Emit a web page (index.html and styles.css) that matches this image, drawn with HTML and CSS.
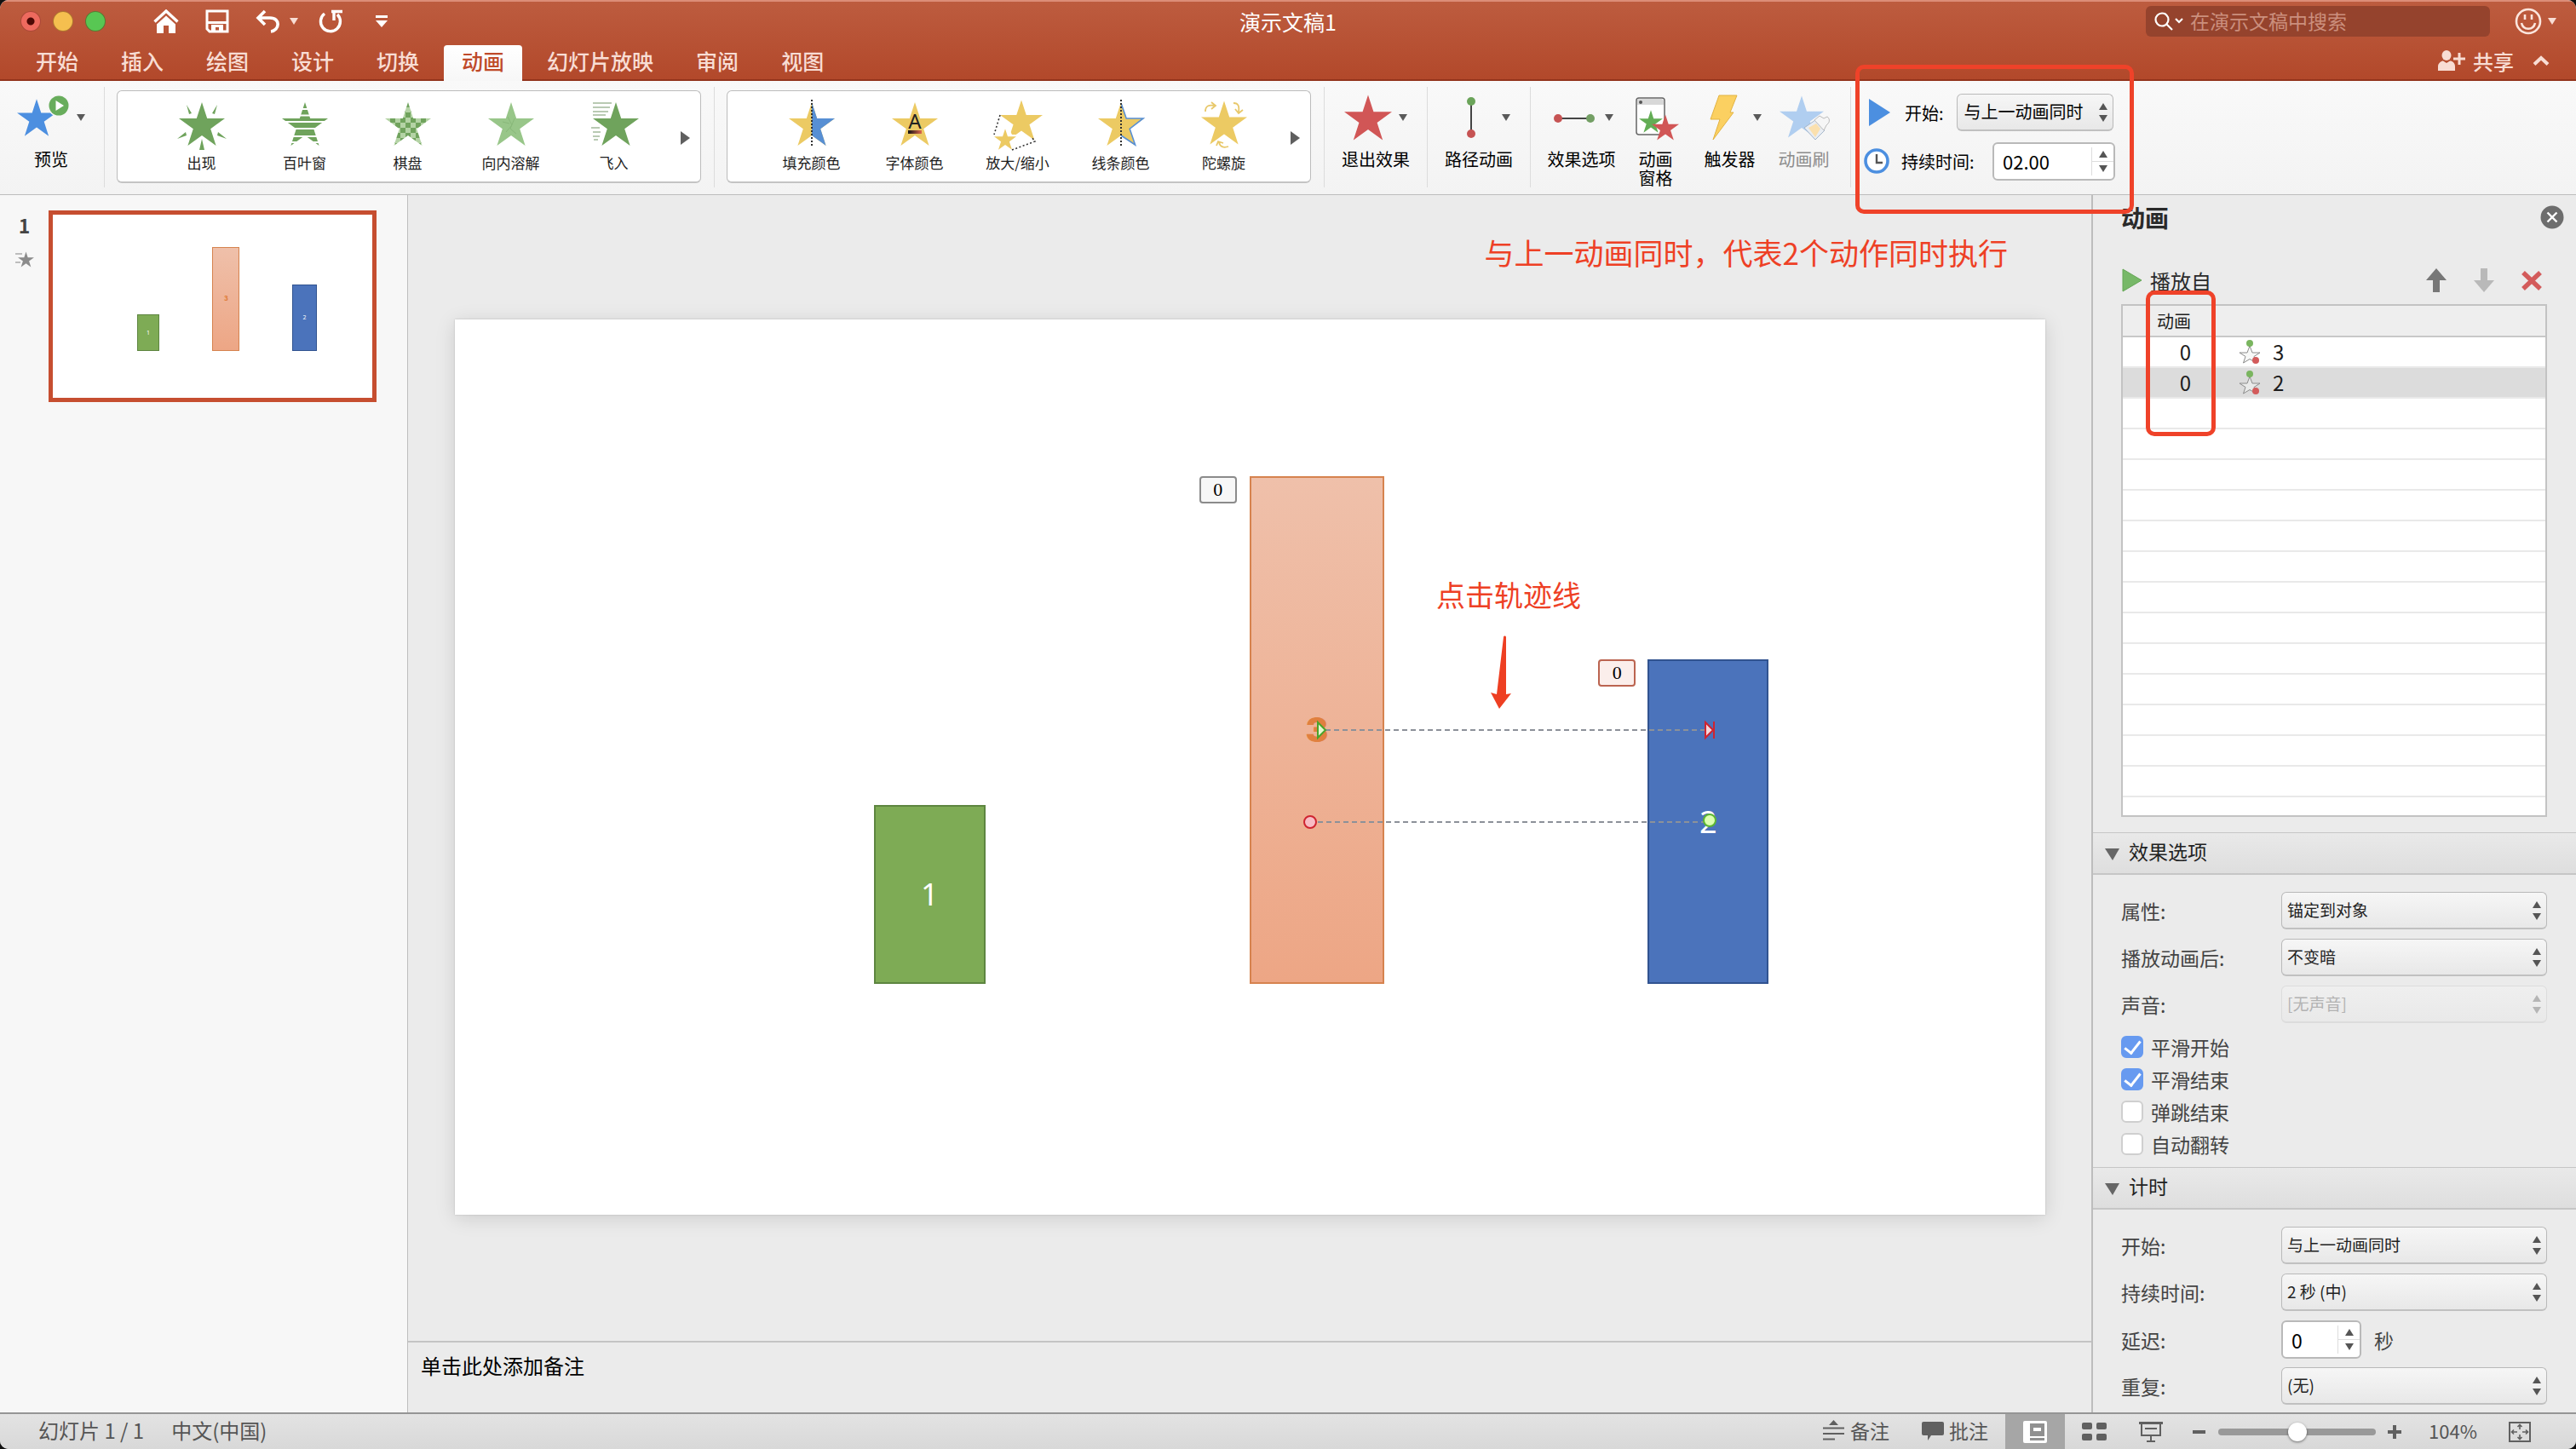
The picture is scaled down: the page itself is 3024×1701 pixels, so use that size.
FILE: index.html
```html
<!DOCTYPE html>
<html lang="zh-CN">
<head>
<meta charset="utf-8">
<meta name="viewport" content="width=device-width, initial-scale=1">
<title>演示文稿1</title>
<link rel="stylesheet" href="styles.css">
</head>
<body>
<svg class="defs" aria-hidden="true">
  <defs>
    <symbol id="star" viewBox="0 0 54 51"><path d="M27 0 33.2 19H54L37.2 31.2 43.6 51 27 39 10.4 51 16.8 31.2 0 19H20.800Z"/></symbol>
    <symbol id="down" viewBox="0 0 10 8"><path d="M0 0H10L5 8Z"/></symbol>
    <symbol id="updown" viewBox="0 0 10 22"><path d="M0 8 5 0 10 8ZM0 14H10L5 22Z"/></symbol>
    <symbol id="path-star" viewBox="0 0 26 28">
      <path d="M13 7 16 15H25L18 19.500 20.500 27 13 22.500 5.500 27 8 19.500 1 15H10Z" fill="#f1f3f1" fill-opacity=".6" stroke="#8c8c8c"/>
      <circle cx="13" cy="4" r="4" fill="#7ab55f"/><circle cx="20" cy="24" r="4" fill="#d35b5b"/>
    </symbol>
    <pattern id="checks" width="12" height="12" patternUnits="userSpaceOnUse"><rect width="12" height="12" fill="#b4d3a5"/><path d="M0 0H6V6H0ZM6 6H12V12H6Z" fill="#70a35d"/></pattern>
    <linearGradient id="ink"><stop stop-color="#111"/><stop offset="1" stop-color="#e0694f"/></linearGradient>
  </defs>
</svg>
<div class="window">
  <header class="titlebar">
    <div class="title-row">
      <div class="title-left">
        <div class="lights"><button class="light close" aria-label="关闭"></button><button class="light minimise" aria-label="最小化"></button><button class="light zoom" aria-label="缩放"></button></div>
        <div class="quick">
          <button aria-label="主页"><svg width="30" height="28" viewBox="0 0 30 28"><path d="M1.500 14.500 15 2 28.500 14.500" fill="none" stroke="#fff" stroke-width="3.400"/><path d="M4 17.500 15 7.500 26 17.500V28H18V19H12V28H4Z" fill="#fff"/></svg></button>
          <button aria-label="保存"><svg width="28" height="28" viewBox="0 0 28 28"><path d="M2 2H26V26H5L2 23Z" fill="none" stroke="#fff" stroke-width="3"/><path d="M2 14H26V17H2ZM7 18H21V27H16V21H12V27H7Z" fill="#fff"/></svg></button>
          <button class="undo" aria-label="撤消"><svg width="28" height="28" viewBox="0 0 28 28"><path d="M11 2 3 10 11 18M3.500 10H17C30 10 28 25 18 26" fill="none" stroke="#fff" stroke-width="3.600"/></svg><svg class="caret" width="10" height="8"><use href="#down"/></svg></button>
          <button class="redo" aria-label="重复"><svg width="30" height="28" viewBox="0 0 30 28"><path d="M7 5A11.500 11.500 0 1 0 22 6M15 2.500H28M18 2V13" fill="none" stroke="#fff" stroke-width="3.400"/></svg></button>
          <button aria-label="自定义工具栏"><svg width="14" height="14" viewBox="0 0 14 14"><path d="M0 0H14V3H0ZM0 6H14L7 14Z" fill="#fff"/></svg></button>
        </div>
      </div>
      <h1>演示文稿1</h1>
      <div class="title-right">
        <label class="search"><svg width="36" height="22" viewBox="0 0 36 22"><circle cx="9" cy="9" r="7.500" fill="none" stroke="#fff" stroke-width="2.200"/><path d="M14 14 21 21M25 8 29 12 33 8" fill="none" stroke="#fff" stroke-width="2.200"/></svg><input type="search" placeholder="在演示文稿中搜索" aria-label="在演示文稿中搜索"></label>
        <button class="smile" aria-label="反馈"><svg width="32" height="32" viewBox="0 0 32 32" fill="none" stroke="#fbe5dd"><circle cx="16" cy="16" r="14" stroke-width="2.600"/><path d="M12 8V14M20 8V14" stroke-width="2.600"/><path d="M8 18C10 27 22 27 24 18" stroke-width="2.600"/></svg><svg class="caret" width="10" height="8"><use href="#down"/></svg></button>
      </div>
    </div>
    <nav class="tabs">
      <a href="#">开始</a><a href="#">插入</a><a href="#">绘图</a><a href="#">设计</a><a href="#">切换</a><a href="#" class="active">动画</a><a href="#">幻灯片放映</a><a href="#">审阅</a><a href="#">视图</a>
      <button class="share"><svg width="33" height="24" viewBox="0 0 33 24" fill="#f8ddd4"><ellipse cx="10" cy="6" rx="5.500" ry="6"/><path d="M0 24V19C0 15 4 12.500 6 12.500L10 15 14 12.500C17 12.500 20 15 20 19V24ZM18 8.500H23.500V3H26.500V8.500H32V11.500H26.500V17H23.500V11.500H18Z"/></svg>共享</button>
      <button class="collapse" aria-label="折叠功能区"><svg width="20" height="12" viewBox="0 0 20 12"><path d="M2 10.500 10 3 18 10.500" fill="none" stroke="#f8ddd4" stroke-width="4"/></svg></button>
    </nav>
  </header>

  <section class="ribbon" aria-label="动画">
    <div class="group preview">
      <button class="tool"><span class="tool-icon"><svg width="62" height="54" viewBox="0 0 62 54"><use href="#star" y="2" width="46" height="50" fill="#4c8fe0"/><circle cx="49" cy="13" r="13" fill="#f6f6f6"/><circle cx="49" cy="13" r="11.500" fill="#68ad5c"/><path d="M45.500 7 55 13 45.500 19Z" fill="#fff"/></svg><svg class="caret" width="10" height="8"><use href="#down"/></svg></span><span>预览</span></button>
    </div>
    <div class="group gallery-group"><div class="gallery">
      <button class="effect"><svg width="64" height="60" viewBox="0 0 64 60" fill="#6fa35c"><use href="#star" x="5" y="3" width="54" height="51"/><path d="M14 6 20 16 17 17ZM50 6 44 16 47 17ZM3 46 13 38 14 42ZM61 46 51 38 50 42ZM29 59 32 46 35 59Z" stroke="#fff" stroke-width="2" paint-order="stroke"/></svg><span>出现</span></button>
      <button class="effect"><svg width="64" height="60" viewBox="0 0 64 60" fill="#6fa35c"><use href="#star" x="5" y="3" width="54" height="51"/><path d="M5 11H59M5 18.500H59M5 26H59M5 34H59M5 43H59M5 50H59" stroke="#fff" stroke-width="1.800"/></svg><span>百叶窗</span></button>
      <button class="effect"><svg width="64" height="60" viewBox="0 0 64 60"><g transform="translate(5 3)"><path d="M27 0 33.200 19H54L37.200 31.200 43.600 51 27 39 10.400 51 16.800 31.200 0 19H20.800Z" fill="url(#checks)"/></g></svg><span>棋盘</span></button>
      <button class="effect"><svg width="64" height="60" viewBox="0 0 64 60"><use href="#star" x="5" y="3" width="54" height="51" fill="#98c689"/><path d="M28 20 33 30 26 38M36 22 31 34 38 40M22 26 30 28" fill="none" stroke="#88b879"/></svg><span>向内溶解</span></button>
      <button class="effect"><svg width="64" height="60" viewBox="0 0 64 60"><use href="#star" x="7" y="3" width="54" height="51" fill="#6fa35c"/><path d="M7 4H29M7 9H27M7 14H25M7 18H22M5 33H15M7 38H16M7 43H15M8 47H13" stroke="#a3b99a" stroke-width="1.500"/></svg><span>飞入</span></button>
      <button class="more" aria-label="更多进入效果"><svg width="12" height="16"><path d="M0 0 11 8 0 16Z" fill="#5f5f5f"/></svg></button>
    </div></div>
    <div class="group gallery-group"><div class="gallery">
      <button class="effect"><svg width="64" height="60" viewBox="0 0 64 60"><use href="#star" x="5" y="3" width="54" height="51" fill="#ecca63"/><path d="M32 3 38.200 22H59L42.200 34.200 48.600 54 32 42Z" fill="#578fd4"/><path d="M32 0V54" stroke="#333" stroke-width="2" stroke-dasharray="2 2"/></svg><span>填充颜色</span></button>
      <button class="effect"><svg width="64" height="60" viewBox="0 0 64 60"><use href="#star" x="5" y="3" width="54" height="51" fill="#ecca63"/><text x="32" y="34" text-anchor="middle" class="glyph-a">A</text><path d="M24 36H40V40H24Z" fill="url(#ink)"/></svg><span>字体颜色</span></button>
      <button class="effect"><svg width="64" height="60" viewBox="0 0 64 60"><use href="#star" x="11" y="0" width="50" height="48" fill="#ecca63"/><path d="M17 33 20 31 25 41H30L24 49 26 59 17 53 8 59 10 48 3 42H13Z" fill="#fff"/><use href="#star" x="4" y="34" width="26" height="25" fill="#ecca63"/><path d="M11 18 4 41M25 59 52 49 48 44" fill="none" stroke="#333" stroke-width="1.600" stroke-dasharray="2 2.500"/></svg><span>放大/缩小</span></button>
      <button class="effect"><svg width="64" height="60" viewBox="0 0 64 60"><use href="#star" x="5" y="3" width="54" height="51" fill="#ecca63"/><path d="M32 4 38.200 22H58L42.200 34.200 48.600 53 32 42" fill="none" stroke="#578fd4" stroke-width="1.600"/><path d="M32 0V54" stroke="#333" stroke-width="2" stroke-dasharray="2 2"/></svg><span>线条颜色</span></button>
      <button class="effect"><svg width="64" height="60" viewBox="0 0 64 60"><use href="#star" x="5" y="1" width="54" height="52" fill="#ecca63"/><path d="M10 14C10 7 14 6 21 7M17 3 22 7 17 11M43 4C49 4 50 8 49 15M45 11 49 16 54 12M37 55C31 57 27 55 26 50M23 54 25 49 31 51" fill="none" stroke="#e8c86a" stroke-width="1.800"/></svg><span>陀螺旋</span></button>
      <button class="more" aria-label="更多强调效果"><svg width="12" height="16"><path d="M0 0 11 8 0 16Z" fill="#5f5f5f"/></svg></button>
    </div></div>
    <div class="group single"><button class="tool"><span class="tool-icon"><svg width="56" height="54" viewBox="0 0 56 54"><use href="#star" width="56" height="54" fill="#d15656"/></svg><svg class="caret" width="10" height="8"><use href="#down"/></svg></span><span>退出效果</span></button></div>
    <div class="group single"><button class="tool"><span class="tool-icon"><svg width="56" height="54" viewBox="0 0 56 54"><path d="M28 8V46" stroke="#444" stroke-width="2"/><circle cx="28" cy="8" r="5" fill="#6ba45a"/><circle cx="28" cy="46" r="5" fill="#c65353"/></svg><svg class="caret" width="10" height="8"><use href="#down"/></svg></span><span>路径动画</span></button></div>
    <div class="group effects">
      <button class="tool"><span class="tool-icon"><svg width="56" height="54" viewBox="0 0 56 54"><path d="M9 28H47" stroke="#444" stroke-width="2"/><circle cx="9" cy="28" r="5" fill="#c65353"/><circle cx="47" cy="28" r="5" fill="#739f64"/></svg><svg class="caret" width="10" height="8"><use href="#down"/></svg></span><span>效果选项</span></button>
      <button class="tool"><span class="tool-icon"><svg width="56" height="54" viewBox="0 0 56 54"><rect x="5" y="4" width="33" height="43" rx="3" fill="#fff" stroke="#666" stroke-width="1.500"/><path d="M6 7C6 5 7 5 8 5H35L37 7V12H6Z" fill="#d8d8d8"/><circle cx="10" cy="9" r="2" fill="#555"/><use href="#star" x="8" y="18" width="28" height="27" fill="#63ad55"/><use href="#star" x="23" y="23" width="32" height="31" fill="#d15656"/></svg></span><span>动画<br>窗格</span></button>
      <button class="tool"><span class="tool-icon"><svg width="56" height="54" viewBox="0 0 56 54"><path d="M24 1H45L37 21H41L17 53 25 29H14Z" fill="#fbd061" stroke="#e2b343"/></svg><svg class="caret" width="10" height="8"><use href="#down"/></svg></span><span>触发器</span></button>
      <button class="tool" disabled><span class="tool-icon"><svg width="62" height="54" viewBox="0 0 62 54"><use href="#star" x="2" y="1" width="52" height="50" fill="#b0cef0"/><path d="M31 39 44 30 55 42 44 53Z" fill="#e9edf3" stroke="#a4b6cb"/><path d="M36 39 45 34 50 40 44 50Z" fill="#fbe0ae"/><path d="M43 30 49 25 54 28 58 26C61 28 61 32 59 34L57 36 54 42Z" fill="#f6f6f6" stroke="#bbb"/></svg></span><span>动画刷</span></button>
    </div>
    <div class="timing">
      <div class="timing-row start"><svg width="25" height="32"><path d="M0 0 25 16 0 32Z" fill="#4c8fe0"/></svg><label for="r-start">开始:</label><span class="select"><select id="r-start"><option>与上一动画同时</option></select><svg width="10" height="22"><use href="#updown"/></svg></span></div>
      <div class="timing-row duration"><svg width="30" height="30" viewBox="0 0 30 30"><circle cx="15" cy="15" r="13" fill="#fff" stroke="#4c8fe0" stroke-width="3.600"/><path d="M15 7V17H22" fill="none" stroke="#555" stroke-width="2.400"/></svg><label for="r-time">持续时间:</label><span class="stepper"><input id="r-time" type="text" value="02.00"><span class="steps"><button aria-label="增加"><svg width="10" height="8"><path d="M0 8 5 0 10 8Z"/></svg></button><button aria-label="减少"><svg width="10" height="8"><use href="#down"/></svg></button></span></span></div>
      <div class="mark mark-timing"></div>
    </div>
  </section>

  <main class="work">
    <aside class="slides">
      <div class="slide-no"><span>1</span><svg width="22" height="19" viewBox="0 0 22 19"><use href="#star" x="3" width="19" height="19" fill="#8b8b8b"/><path d="M0 3H8M0 13H6" stroke="#aaa" stroke-width="1.500"/></svg></div>
      <div class="thumb"><div class="bar bar1">1</div><div class="bar bar3">3</div><div class="bar bar2">2</div></div>
    </aside>
    <section class="stage">
      <div class="canvas">
        <p class="remark remark-top">与上一动画同时，代表2个动作同时执行</p>
        <div class="slide">
          <div class="bar bar1">1</div><div class="bar bar3">3</div><div class="bar bar2">2</div>
          <span class="order order3">0</span><span class="order order2">0</span>
          <svg class="paths" viewBox="0 0 1867 1051">
            <path d="M1022 482H1479M1013 590H1471" stroke="#8c9199" stroke-width="2" stroke-dasharray="6 4"/>
            <path d="M1013 473V491L1022 482Z" fill="#e6f6cf" stroke="#4aa32c" stroke-width="2"/>
            <path d="M1468 473V491L1477 482Z" fill="#f6d5da" stroke="#cf2430" stroke-width="2"/><path d="M1478 472V492" stroke="#cf2430" stroke-width="2"/>
            <circle cx="1004" cy="590" r="7" fill="#f8bcc4" stroke="#cf2430" stroke-width="2"/>
            <circle cx="1473" cy="588" r="7" fill="#dcffb0" stroke="#5cb531" stroke-width="2"/>
            <path d="M1231 373C1231 371 1234 371 1234 373L1234 440 1240 439 1226 457 1216 438 1223 440Z" fill="#ee3f22"/>
          </svg>
          <p class="remark remark-path">点击轨迹线</p>
        </div>
      </div>
      <div class="notes">单击此处添加备注</div>
    </section>
    <aside class="pane">
      <div class="pane-head"><h2>动画</h2><button aria-label="关闭窗格"><svg width="28" height="28" viewBox="0 0 28 28"><circle cx="14" cy="14" r="13.500" fill="#6d6d6d"/><path d="M8.500 8.500 19.500 19.500M19.500 8.500 8.500 19.500" stroke="#fff" stroke-width="2.400"/></svg></button></div>
      <div class="pane-tools">
        <button class="play"><svg width="24" height="28"><path d="M1 1 23 14 1 27Z" fill="#77b868" stroke="#64a655"/></svg>播放自</button>
        <button aria-label="上移"><svg width="24" height="28"><path d="M12 0 24 14H16V28H8V14H0Z" fill="#777"/></svg></button>
        <button aria-label="下移"><svg width="24" height="28"><path d="M12 28 24 14H16V0H8V14H0Z" fill="#b9b9b9"/></svg></button>
        <button aria-label="删除"><svg width="24" height="28"><path d="M2 5 22 24M22 5 2 24" stroke="#d35b5b" stroke-width="5.500"/></svg></button>
      </div>
      <div class="list">
        <table>
          <thead><tr><th class="num">动画</th><th></th></tr></thead>
          <tbody>
            <tr><td class="num">0</td><td><span class="item"><svg width="26" height="28"><use href="#path-star"/></svg>3</span></td></tr>
            <tr class="selected"><td class="num">0</td><td><span class="item"><svg width="26" height="28"><use href="#path-star"/></svg>2</span></td></tr>
          </tbody>
        </table>
        <div class="blank"></div>
        <div class="mark mark-list"></div>
      </div>
      <h3><svg width="18" height="14"><path d="M0 0H17L9 14Z" fill="#666"/></svg>效果选项</h3>
      <div class="section">
        <div class="field"><label for="attr">属性:</label><span class="select"><select id="attr"><option>锚定到对象</option></select><svg width="10" height="22"><use href="#updown"/></svg></span></div>
        <div class="field"><label for="after">播放动画后:</label><span class="select"><select id="after"><option>不变暗</option></select><svg width="10" height="22"><use href="#updown"/></svg></span></div>
        <div class="field"><label for="sound">声音:</label><span class="select off"><select id="sound" disabled><option>[无声音]</option></select><svg width="10" height="22"><use href="#updown"/></svg></span></div>
        <div class="checks">
          <label><input type="checkbox" checked>平滑开始</label>
          <label><input type="checkbox" checked>平滑结束</label>
          <label><input type="checkbox">弹跳结束</label>
          <label><input type="checkbox">自动翻转</label>
        </div>
      </div>
      <h3><svg width="18" height="14"><path d="M0 0H17L9 14Z" fill="#666"/></svg>计时</h3>
      <div class="section timing-section">
        <div class="field"><label for="p-start">开始:</label><span class="select"><select id="p-start"><option>与上一动画同时</option></select><svg width="10" height="22"><use href="#updown"/></svg></span></div>
        <div class="field"><label for="p-time">持续时间:</label><span class="select"><select id="p-time"><option>2 秒 (中)</option></select><svg width="10" height="22"><use href="#updown"/></svg></span></div>
        <div class="field"><label for="delay">延迟:</label><span class="delay"><span class="stepper"><input id="delay" type="text" value="0"><span class="steps"><button aria-label="增加"><svg width="10" height="8"><path d="M0 8 5 0 10 8Z"/></svg></button><button aria-label="减少"><svg width="10" height="8"><use href="#down"/></svg></button></span></span>秒</span></div>
        <div class="field"><label for="repeat">重复:</label><span class="select"><select id="repeat"><option>(无)</option></select><svg width="10" height="22"><use href="#updown"/></svg></span></div>
      </div>
    </aside>
  </main>

  <footer class="status">
    <span>幻灯片 1 / 1</span><span class="lang">中文(中国)</span>
    <button class="status-btn push"><svg width="27" height="24" viewBox="0 0 27 24" fill="#606060"><path d="M8 6 13.500 0 19 6ZM1 8.500H26V10.500H1ZM1 15H26V17H1ZM1 21.500H15V23.500H1Z"/></svg>备注</button>
    <button class="status-btn comments"><svg width="26" height="24" viewBox="0 0 26 24"><path d="M2 2H24Q26 2 26 4V16Q26 18 24 18H11L7 24V18H2Q0 18 0 16V4Q0 2 2 2Z" fill="#606060"/></svg>批注</button>
    <button class="view on" aria-label="普通视图"><svg width="28" height="26" viewBox="0 0 28 26"><rect width="28" height="26" rx="2" fill="#fff"/><path d="M8 3H25V18H8ZM8 20H25V23H8Z" fill="#909090"/><path d="M12 8H21V12H12Z" fill="#fff"/></svg></button>
    <button class="view" aria-label="幻灯片浏览"><svg width="30" height="22" viewBox="0 0 30 22" fill="#606060"><rect width="12" height="8" rx="2"/><rect x="17" width="12" height="8" rx="2"/><rect y="13" width="12" height="8" rx="2"/><rect x="17" y="13" width="12" height="8" rx="2"/></svg></button>
    <button class="view show" aria-label="幻灯片放映"><svg width="28" height="24" viewBox="0 0 28 24"><path d="M0 0H28V3H0Z" fill="#606060"/><path d="M3 3V16H25V3M7 8H21M14 16V23M9 23H19" fill="none" stroke="#606060" stroke-width="2"/></svg></button>
    <button class="zoom-btn out" aria-label="缩小"><svg width="16" height="16"><path d="M0 6H15V10H0Z" fill="#606060"/></svg></button>
    <input class="slider" type="range" min="0" max="100" value="50" aria-label="缩放">
    <button class="zoom-btn" aria-label="放大"><svg width="16" height="16"><path d="M0 6H6V0H10V6H16V10H10V16H6V10H0Z" fill="#606060"/></svg></button>
    <span class="percent">104%</span>
    <button class="fit" aria-label="适应窗口"><svg width="26" height="24" viewBox="0 0 26 24" fill="none" stroke="#606060"><rect x="1" y="1" width="24" height="22" stroke-width="2"/><path d="M13 3V9M10.500 6 13 3.500 15.500 6M13 15V21M10.500 18 13 20.500 15.500 18M3 12H10M6 9.500 3.500 12 6 14.500M16 12H23M20 9.500 22.500 12 20 14.500" stroke-width="1.600"/></svg></button>
  </footer>
</div>
</body>
</html>
```

FILE: styles.css
```css
* { box-sizing: border-box; }
html { background: #111; }
body {
  margin: 0;
  font-family: "Noto Sans CJK SC", "Noto Sans", sans-serif;
  font-size: 20px;
  color: #1d1d1d;
}
h1, h2, h3, p { margin: 0; }
button, input, select { font: inherit; color: inherit; margin: 0; padding: 0; border: 0; background: none; outline: 0; }
button { display: flex; align-items: center; justify-content: center; white-space: nowrap; }
svg { display: block; flex: none; }
.defs { position: absolute; width: 0; height: 0; }
.window { display: flex; flex-direction: column; min-height: 100vh; border-radius: 10px; overflow: hidden; background: #ebebeb; }

/* Title bar and tabs */
.titlebar { background: linear-gradient(#bd5c3f, #b2482a); border-top: 2px solid #dc8d78; box-shadow: inset 0 -2px #93341c; color: #f8ddd4; }
.title-row { display: grid; grid-template-columns: 1fr auto 1fr; height: 51px; padding-bottom: 6px; align-items: center; }
.title-left, .title-right, .quick, .lights { display: flex; align-items: center; }
.lights { gap: 14px; padding-left: 24px; }
.light { width: 24px; height: 24px; border-radius: 50%; border: 1px solid rgba(90, 30, 10, .45); }
.close { background: radial-gradient(circle, #4d0905 0 4px, #ee6a5e 5px); }
.minimise { background: #f5bf4f; }
.zoom { background: #58c753; }
.quick { padding-left: 56px; gap: 31px; }
.undo { gap: 12px; }
.redo { margin-left: -7px; }
.quick .redo { margin-right: 6px; }
.caret { fill: #5a5a5a; }
.titlebar .caret { fill: #f8ddd4; }
h1 { font-size: 25px; line-height: 30px; font-weight: 400; color: #fff; }
.title-right { justify-content: flex-end; padding-right: 23px; }
.search { display: flex; align-items: center; gap: 6px; width: 404px; height: 36px; padding-left: 10px; border-radius: 6px; background: #95432d; }
.search input { flex: 1; min-width: 0; font-size: 23px; height: 34px; padding-bottom: 2px; appearance: none; }
.search input::placeholder { color: #cb8f7d; opacity: 1; }
.smile { margin-left: 29px; gap: 7px; }
.tabs { display: flex; gap: 8px; height: 42px; padding: 0 31px 0 21px; }
.tabs a { padding: 0 21px; font-size: 25px; font-weight: 500; line-height: 36px; color: #f8ddd4; text-decoration: none; }
.tabs .active { background: linear-gradient(#fff, #f7f7f7); color: #bf4a2a; border-radius: 4px 4px 0 0; }
.share { margin-left: auto; gap: 8px; height: 36px; font-size: 24px; font-weight: 500; }
.collapse { height: 36px; margin-left: 14px; }

/* Ribbon */
.ribbon { display: flex; padding: 7px 0 8px; background: linear-gradient(#f9f9f9, #f3f3f3); border-bottom: 1px solid #bdbdbd; color: #000; }
.group { display: flex; border-right: 1px solid #dcdcdc; flex: none; }
.preview { width: 123px; }
.single { width: 121px; }
.preview .tool { width: 120px; }
.single .tool { width: 100%; }
.effects { width: 376px; padding-left: 16px; }
.effects .tool { width: 87px; }
.tool { flex-direction: column; justify-content: flex-start; padding-top: 8px; line-height: 22px; }
.tool > span:last-child { margin-top: 10px; }
.tool-icon { display: flex; align-items: center; gap: 8px; height: 56px; }
.tool:disabled { color: #8c8c8c; }
.gallery-group { width: 716px; padding: 4px 15px 5px 14px; }
.gallery { flex: 1; display: flex; padding-left: 38px; border: 1px solid #bcbcbc; border-bottom: 2px solid #c4c4c4; border-radius: 6px; background: #fff; }
.effect { width: 121px; flex-direction: column; justify-content: flex-start; padding-top: 10px; gap: 2px; font-size: 17px; line-height: 24px; color: #1d1d1d; }
.more { flex: 1; padding: 4px 0 0 6px; }
.glyph-a { font: 24px "Noto Sans", sans-serif; fill: #222; }
.timing { position: relative; z-index: 3; width: 327px; margin-left: 5px; display: flex; flex-direction: column; gap: 12px; padding-top: 8px; }
.timing-row { display: flex; align-items: center; }
.timing-row label { white-space: nowrap; }
.start { padding-left: 16px; height: 44px; }
.start label { margin: 0 15px 0 17px; }
.start .select { width: 184px; }
.start select { font-size: 20px; }
.duration { padding-left: 10px; height: 46px; }
.duration label { margin: 0 auto 0 14px; }
.duration .stepper { width: 144px; margin-right: 22px; font-size: 22px; }
.mark { position: absolute; border: 5px solid #ef4229; border-radius: 10px; pointer-events: none; z-index: 3; }
.mark-timing { inset: -26px 0 -31px; }

/* Shared controls */
.select { display: grid; align-items: center; }
.select > * { grid-area: 1 / 1; }
.select select { appearance: none; width: 100%; height: 44px; padding: 0 26px 2px 6px; font-size: 19px; border: 1px solid #b9b9b9; border-bottom: 2px solid #c0c0c0; border-radius: 6px; background: linear-gradient(#f6f6f6, #e8e8e8); }
.start .select select { font-size: 20px; padding-left: 8px; }
.select svg { justify-self: end; margin-right: 7px; fill: #555; pointer-events: none; }
.select.off select { border-color: #dcdcdc; color: #b2b2b2; opacity: 1; background: linear-gradient(#efefef, #e9e9e9); }
.select.off svg { fill: #b5b5b5; }
.stepper { display: flex; width: 94px; height: 45px; border: 2px solid #b9b9b9; border-radius: 6px; background: #fff; color: #000; }
.stepper input { flex: 1; min-width: 0; padding-left: 10px; }
.steps { width: 26px; margin: 4px 0; border-left: 1px solid #ddd; display: flex; flex-direction: column; }
.steps button { flex: 1; }
.steps button + button { border-top: 1px solid #ddd; }
.steps svg { fill: #555; }

/* Work area */
.work { flex: 1; display: grid; grid-template-columns: 479px 1fr 569px; }
.slides { display: flex; align-items: flex-start; padding-top: 18px; background: #f7f7f7; border-right: 1px solid #bdbdbd; }
.slide-no { width: 57px; display: flex; flex-direction: column; align-items: center; gap: 14px; font-size: 23px; font-weight: 700; line-height: 34px; color: #444; }
.thumb { position: relative; width: 385px; height: 225px; border: 5px solid #c64e30; background: #fff; font-size: 7px; }
.stage { display: flex; flex-direction: column; min-width: 0; }
.canvas { position: relative; flex: 1; padding: 146px 54px 0 55px; }
.slide { position: relative; width: 100%; aspect-ratio: 1867 / 1051; background: #fff; box-shadow: 0 0 2px #bbb, 0 4px 22px rgba(0, 0, 0, .13); font-size: 36px; }
.bar { position: absolute; display: flex; align-items: center; justify-content: center; line-height: 1; color: #fff; border: 2px solid; font-family: "Noto Sans", sans-serif; }
.bar1 { left: 26.35%; top: 54.2%; width: 7%; height: 20%; background: #7eab55; border-color: #5d8540; }
.bar3 { left: 49.95%; top: 17.5%; width: 8.5%; height: 56.7%; background: linear-gradient(#efc0aa, #eda685); border-color: #d6834f; color: #e0803f; font-family: Inter, sans-serif; font-weight: 900; }
.bar2 { left: 75%; top: 38%; width: 7.6%; height: 36.2%; background: #4b73bb; border-color: #315390; }
.thumb .bar { border-width: 1px; }
.slide .bar3 { font-size: 40px; }
.order { position: absolute; width: 44px; height: 32px; border: 2px solid #8b8b8b; border-radius: 4px; background: #f7f7f7; font: 22px/28px "Liberation Serif", serif; text-align: center; color: #000; }
.order3 { left: 46.8%; top: 17.5%; }
.order2 { left: 71.9%; top: 38%; background: #fbeeeb; border-color: #bb6450; }
.paths { position: absolute; inset: 0; width: 100%; height: 100%; }
.remark { position: absolute; color: #ee4025; line-height: 40px; white-space: nowrap; }
.remark-top { right: 98px; top: 47px; font-size: 35px; }
.remark-path { left: 61.7%; top: 28.8%; font-size: 34px; }
.notes { height: 84px; padding: 11px 15px; border-top: 2px solid #c4c4c4; font-size: 24px; line-height: 32px; color: #000; }

/* Animation pane */
.pane { display: flex; flex-direction: column; border-left: 2px solid #bdbdbd; font-size: 23px; color: #444; }
.pane-head { display: flex; justify-content: space-between; align-items: center; height: 28px; margin: 12px 14px 0 33px; }
h2 { font-size: 28px; line-height: 28px; font-weight: 700; color: #2a2a2a; }
.pane-tools { display: flex; gap: 32px; height: 28px; margin: 46px 40px 14px 34px; }
.play { margin-right: auto; gap: 9px; font-size: 24px; color: #2a2a2a; }
.list { position: relative; flex: 1; display: flex; flex-direction: column; margin: 0 34px 18px 33px; border: 2px solid #c3c3c3; background: #fff; }
table { width: 100%; border-collapse: collapse; table-layout: fixed; font-size: 24px; color: #1d1d1d; }
th, td { height: 36px; padding: 0; line-height: 34px; text-align: left; font-weight: 400; border-bottom: 2px solid #e9e9e9; }
th { font-size: 20px; background: #eee; border-color: #c8c8c8; }
.num { width: 136px; padding-right: 56px; text-align: right; }
.selected { background: #dcdcdc; }
.item { display: flex; align-items: center; gap: 14px; height: 34px; }
.blank { flex: 1; min-height: 72px; background: repeating-linear-gradient(#fff 0 34px, #e9e9e9 34px 36px); }
.mark-list { left: 27px; top: -18px; width: 82px; height: 171px; }
h3 { display: flex; align-items: center; gap: 10px; height: 50px; padding: 0 0 6px 14px; font-size: 23px; font-weight: 400; color: #222; background: linear-gradient(#e9e9e9, #dedede); border: solid #c6c6c6; border-width: 1px 0 2px; }
h3 svg { margin-top: 8px; }
.section { display: flex; flex-direction: column; gap: 11px; padding: 20px 34px 14px 33px; }
.timing-section { padding-bottom: 9px; }
.field { display: grid; grid-template-columns: 188px 1fr; align-items: center; height: 44px; }
.field .select { color: #222; }
.delay { display: flex; align-items: center; gap: 15px; }
.checks { display: flex; flex-direction: column; gap: 12px; padding-top: 4px; }
.checks label { display: flex; align-items: center; gap: 9px; height: 26px; }
.checks input { appearance: none; display: grid; place-items: center; width: 26px; height: 26px; border: 2px solid #cfcfcf; border-radius: 6px; background: #fff; }
.checks input:checked { border-color: #679af0; background: #679af0; }
.checks input:checked::before { content: ""; width: 8px; height: 16px; margin-bottom: 4px; border: solid #fff; border-width: 0 3px 3px 0; rotate: 38deg; }

/* Status bar */
.status { display: flex; align-items: center; height: 43px; padding: 0 53px 0 45px; border-top: 2px solid #959595; background: linear-gradient(#e3e3e3, #d8d8d8); font-size: 24px; line-height: 36px; color: #555; }
.status > span, .status-btn { padding-bottom: 3px; }
.lang { margin-left: 32px; }
.status-btn { gap: 6px; font-size: 23px; }
.push { margin-left: auto; }
.comments { margin: 0 20px 0 38px; }
.view { width: 70px; height: 100%; }
.on { background: #a6a6a6; }
.show { width: 62px; }
.zoom-btn { width: 44px; }
.out { margin-left: 4px; }
.slider { appearance: none; width: 185px; height: 22px; }
.slider::-webkit-slider-runnable-track { height: 8px; border-radius: 4px; background: #999; }
.slider::-webkit-slider-thumb { appearance: none; width: 22px; height: 22px; margin-top: -7px; border-radius: 50%; background: #fff; box-shadow: 0 1px 3px rgba(0, 0, 0, .5); }
.percent { margin-left: 18px; width: 57px; font-size: 22px; }
.fit { margin-left: 37px; }
```
